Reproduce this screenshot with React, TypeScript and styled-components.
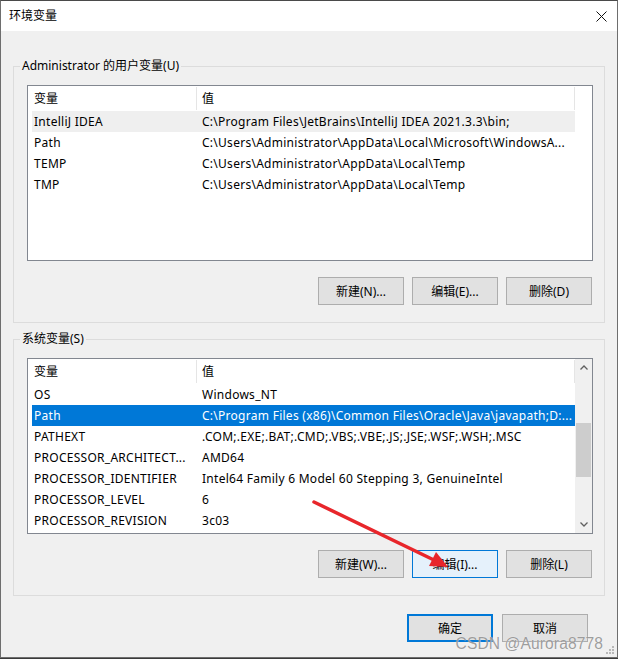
import React from 'react';
import styled, { createGlobalStyle } from 'styled-components';

const FONT = `"Noto Sans", "Noto Sans CJK SC", sans-serif`;

const GlobalStyle = createGlobalStyle`
  html, body {
    margin: 0;
    padding: 0;
    background: #3a3a3a;
  }
  * {
    box-sizing: border-box;
  }
`;

type Row = { name: string; value: string; state?: 'hover' | 'selected' };

const userVars: Row[] = [
  { name: 'IntelliJ IDEA', value: 'C:\\Program Files\\JetBrains\\IntelliJ IDEA 2021.3.3\\bin;', state: 'hover' },
  { name: 'Path', value: 'C:\\Users\\Administrator\\AppData\\Local\\Microsoft\\WindowsA...' },
  { name: 'TEMP', value: 'C:\\Users\\Administrator\\AppData\\Local\\Temp' },
  { name: 'TMP', value: 'C:\\Users\\Administrator\\AppData\\Local\\Temp' },
];

const systemVars: Row[] = [
  { name: 'OS', value: 'Windows_NT' },
  { name: 'Path', value: 'C:\\Program Files (x86)\\Common Files\\Oracle\\Java\\javapath;D:...', state: 'selected' },
  { name: 'PATHEXT', value: '.COM;.EXE;.BAT;.CMD;.VBS;.VBE;.JS;.JSE;.WSF;.WSH;.MSC' },
  { name: 'PROCESSOR_ARCHITECT...', value: 'AMD64' },
  { name: 'PROCESSOR_IDENTIFIER', value: 'Intel64 Family 6 Model 60 Stepping 3, GenuineIntel' },
  { name: 'PROCESSOR_LEVEL', value: '6' },
  { name: 'PROCESSOR_REVISION', value: '3c03' },
];

const VarList = ({ rows, scroll }: { rows: Row[]; scroll?: boolean }) => (
  <ListBox>
    <TableArea>
      <HeaderRow>
        <HeaderCell $first>变量</HeaderCell>
        <HeaderCell>值</HeaderCell>
      </HeaderRow>
      {rows.map((r) => (
        <ItemRow key={r.name} $state={r.state}>
          <NameCell>{r.name}</NameCell>
          <ValueCell>{r.value}</ValueCell>
        </ItemRow>
      ))}
    </TableArea>
    <ScrollTrack $visible={!!scroll}>
      {scroll && (
        <>
          <ScrollButton>
            <svg width="8" height="5" viewBox="0 0 8 5">
              <path d="M0.5 4.5 L4 1 L7.5 4.5" fill="none" stroke="#606060" strokeWidth="1.3" />
            </svg>
          </ScrollButton>
          <ThumbSlot>
            <Thumb />
          </ThumbSlot>
          <ScrollButton>
            <svg width="8" height="5" viewBox="0 0 8 5">
              <path d="M0.5 0.5 L4 4 L7.5 0.5" fill="none" stroke="#606060" strokeWidth="1.3" />
            </svg>
          </ScrollButton>
        </>
      )}
    </ScrollTrack>
  </ListBox>
);

const App = () => {
  return (
    <>
      <GlobalStyle />
      <Window>
        <TitleBar>
          <Title>环境变量</Title>
          <CloseButton>
            <svg width="11" height="11" viewBox="0 0 11 11">
              <path d="M0.5 0.5 L10.5 10.5 M10.5 0.5 L0.5 10.5" stroke="#111" strokeWidth="1" />
            </svg>
          </CloseButton>
        </TitleBar>
        <Body>
          <Group>
            <GroupLabel>Administrator 的用户变量(U)</GroupLabel>
            <VarList rows={userVars} />
            <ButtonRow>
              <Button>新建(N)...</Button>
              <Button>编辑(E)...</Button>
              <Button>删除(D)</Button>
            </ButtonRow>
          </Group>
          <Group>
            <GroupLabel>系统变量(S)</GroupLabel>
            <VarList rows={systemVars} scroll />
            <ButtonRow>
              <Button>新建(W)...</Button>
              <Button $hover>编辑(I)...</Button>
              <Button>删除(L)</Button>
            </ButtonRow>
          </Group>
          <Footer>
            <Button $default>确定</Button>
            <Button>取消</Button>
          </Footer>
        </Body>
        <Watermark>CSDN @Aurora8778</Watermark>
        <Grip width="9" height="9" viewBox="0 0 9 9">
          <g fill="#b8b8b8">
            <rect x="7" y="1" width="2" height="2" />
            <rect x="4" y="4" width="2" height="2" />
            <rect x="7" y="4" width="2" height="2" />
            <rect x="1" y="7" width="2" height="2" />
            <rect x="4" y="7" width="2" height="2" />
            <rect x="7" y="7" width="2" height="2" />
          </g>
        </Grip>
        <Arrow width="618" height="659" viewBox="0 0 618 659">
          <line x1="314" y1="502" x2="436" y2="561" stroke="#e8262b" strokeWidth="3.5" strokeLinecap="round" />
          <polygon points="448,567 429,566 436,552" fill="#e8262b" />
        </Arrow>
      </Window>
    </>
  );
};

export default App;

const Window = styled.div`
  position: relative;
  width: 618px;
  height: 658px;
  display: flex;
  flex-direction: column;
  border: 1px solid #6e6e6e;
  border-top-color: #4a4a4a;
  background: #f0f0f0;
  font-family: ${FONT};
  font-size: 12px;
  color: #000;
  overflow: hidden;
`;

const TitleBar = styled.div`
  height: 30px;
  flex: 0 0 30px;
  background: #fff;
  display: flex;
  align-items: center;
  justify-content: space-between;
  padding: 0 10px 0 8px;
`;

const Title = styled.span`
  font-size: 12px;
  line-height: 16px;
`;

const CloseButton = styled.div`
  width: 11px;
  height: 11px;
  display: flex;
  margin-top: 1px;
`;

const Body = styled.div`
  flex: 1;
  display: flex;
  flex-direction: column;
  padding: 35px 12px 0 12px;
  gap: 16px;
`;

const Group = styled.div`
  position: relative;
  height: 257px;
  border: 1px solid #dcdcdc;
  padding: 18px 11px 0 13px;
  display: flex;
  flex-direction: column;
`;

const GroupLabel = styled.span`
  position: absolute;
  top: -9px;
  left: 6px;
  padding: 0 2px;
  line-height: 16px;
  background: #f0f0f0;
  white-space: nowrap;
`;

const ListBox = styled.div`
  height: 176px;
  border: 1px solid #828790;
  background: #fff;
  display: flex;
  overflow: hidden;
`;

const TableArea = styled.div`
  flex: 1;
  min-width: 0;
  padding-left: 4px;
  display: flex;
  flex-direction: column;
`;

const HeaderRow = styled.div`
  height: 25px;
  flex: 0 0 25px;
  display: flex;
  align-items: stretch;
`;

const HeaderCell = styled.div<{ $first?: boolean }>`
  display: flex;
  align-items: center;
  padding-left: ${({ $first }) => ($first ? '2px' : '5px')};
  width: ${({ $first }) => ($first ? '165px' : 'auto')};
  flex: ${({ $first }) => ($first ? '0 0 165px' : '1')};
  border-right: 1px solid #e5e5e5;
  margin: 1px 0 1px;
  padding-bottom: 1px;
`;

const ItemRow = styled.div<{ $state?: 'hover' | 'selected' }>`
  height: 21px;
  flex: 0 0 21px;
  display: flex;
  align-items: center;
  letter-spacing: 0.27px;
  background: ${({ $state }) =>
    $state === 'selected' ? '#0078d7' : $state === 'hover' ? '#efefef' : 'transparent'};
  color: ${({ $state }) => ($state === 'selected' ? '#fff' : '#000')};
`;

const NameCell = styled.div`
  flex: 0 0 165px;
  padding-left: 2px;
  white-space: nowrap;
  overflow: hidden;
`;

const ValueCell = styled.div`
  flex: 1;
  min-width: 0;
  padding-left: 5px;
  white-space: nowrap;
  overflow: hidden;
`;

const ScrollTrack = styled.div<{ $visible: boolean }>`
  width: 17px;
  flex: 0 0 17px;
  display: flex;
  flex-direction: column;
  background: ${({ $visible }) => ($visible ? '#f0f0f0' : 'transparent')};
`;

const ScrollButton = styled.div`
  height: 17px;
  flex: 0 0 17px;
  display: flex;
  align-items: center;
  justify-content: center;
`;

const ThumbSlot = styled.div`
  flex: 1;
  padding: 47px 1px 0;
`;

const Thumb = styled.div`
  height: 54px;
  background: #cdcdcd;
`;

const ButtonRow = styled.div`
  display: flex;
  justify-content: flex-end;
  gap: 8px;
  margin-top: 16px;
  padding-right: 1px;
`;

const Button = styled.div<{ $hover?: boolean; $default?: boolean }>`
  width: 86px;
  height: 28px;
  display: flex;
  align-items: center;
  justify-content: center;
  background: ${({ $hover }) => ($hover ? '#e5f1fb' : '#e1e1e1')};
  border: ${({ $hover, $default }) =>
    $default ? '2px solid #0078d7' : $hover ? '1px solid #0078d7' : '1px solid #adadad'};
  white-space: nowrap;
`;

const Footer = styled.div`
  display: flex;
  justify-content: flex-end;
  gap: 9px;
  margin-top: 2px;
  padding-right: 17px;
`;

const Watermark = styled.div`
  position: absolute;
  right: 14px;
  bottom: 4px;
  font-family: "Liberation Sans", Arial, sans-serif;
  font-size: 15.6px;
  color: rgba(140, 140, 140, 0.85);
  text-shadow: 0 0 1px rgba(255, 255, 255, 0.8);
  letter-spacing: 0.1px;
  pointer-events: none;
`;

const Grip = styled.svg`
  position: absolute;
  right: 3px;
  bottom: 3px;
`;

const Arrow = styled.svg`
  position: absolute;
  left: -1px;
  top: -1px;
  pointer-events: none;
`;
